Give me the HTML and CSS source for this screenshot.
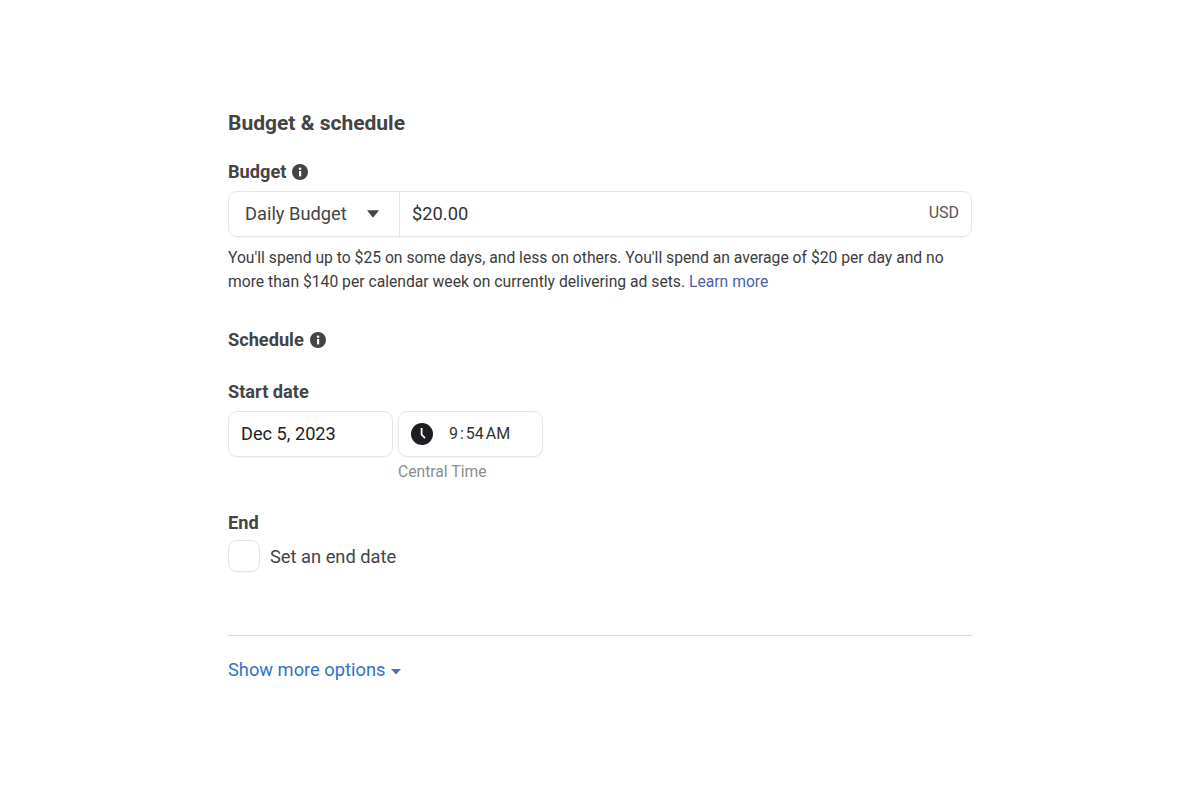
FILE: index.html
```html
<!DOCTYPE html>
<html lang="en-US">
<head>
<meta charset="UTF-8">
<title>Budget &amp; schedule</title>
<link rel="stylesheet" href="styles.css">
</head>
<body>
<div class="panel">
	<h1 class="title">Budget &amp; schedule</h1>

	<div class="label label--budget">
		Budget
		<svg class="info" viewBox="0 0 16 16"><circle cx="8" cy="8" r="8" fill="#444"/><rect x="7" y="7" width="2.2" height="5.4" fill="#fff"/><circle cx="8.1" cy="4.7" r="1.3" fill="#fff"/></svg>
	</div>
	<div class="budget-field">
		<div class="budget-type">
			<span>Daily Budget</span>
			<svg class="caret" viewBox="0 0 14 9"><path d="M1 1.2h12L7.6 8a.8.8 0 0 1-1.2 0z" fill="#444"/></svg>
		</div>
		<div class="budget-amount">
			<span>$20.00</span>
			<span class="currency">USD</span>
		</div>
	</div>
	<p class="hint">You'll spend up to $25 on some days, and less on others. You'll spend an average of $20 per day and no more than $140 per calendar week on currently delivering ad sets. <a class="learn" href="#">Learn more</a></p>

	<div class="label label--schedule">
		Schedule
		<svg class="info" viewBox="0 0 16 16"><circle cx="8" cy="8" r="8" fill="#444"/><rect x="7" y="7" width="2.2" height="5.4" fill="#fff"/><circle cx="8.1" cy="4.7" r="1.3" fill="#fff"/></svg>
	</div>

	<div class="label label--start">Start date</div>
	<div class="date-row">
		<div class="box date">Dec 5, 2023</div>
		<div class="time-col">
			<div class="box time">
				<svg class="clock" viewBox="0 0 22 22"><circle cx="11" cy="11" r="11" fill="#1c1e21"/><path d="M10.6 5v6.6l3.4 3.6" fill="none" stroke="#fff" stroke-width="1.8"/></svg>
				<span class="time-text">9 : 54 AM</span>
			</div>
			<div class="zone">Central Time</div>
		</div>
	</div>

	<div class="label label--end">End</div>
	<div class="end-row">
		<span class="check"></span>
		<span>Set an end date</span>
	</div>

	<hr class="rule">
	<a class="more" href="#">Show more options <svg class="more-caret" viewBox="0 0 10 6"><path d="M0 0h10L5 5.6z" fill="#4a6fc4"/></svg></a>
</div>
</body>
</html>
```

FILE: styles.css
```css
* {
	box-sizing: border-box;
}

body {
	margin: 0;
	background: #fff;
	font-family: Roboto, "Liberation Sans", sans-serif;
	color: #444;
}

.panel {
	width: 744px;
	margin-left: 228px;
	padding-top: 110px;
}

.title {
	margin: 0;
	font-size: 21px;
	line-height: 27px;
	font-weight: 700;
	color: #444;
}

.label {
	display: flex;
	align-items: center;
	gap: 6px;
	font-size: 18.2px;
	line-height: 24px;
	font-weight: 700;
	color: #444;
}

.label--budget {
	margin-top: 23px;
}

.label--schedule {
	margin-top: 34px;
}

.label--start {
	margin-top: 28px;
}

.label--end {
	margin-top: 29px;
}

.info {
	width: 16px;
	height: 16px;
}

.budget-field {
	display: flex;
	height: 46px;
	margin-top: 7px;
	border: 1px solid #e6e6e6;
	border-radius: 9px;
	box-shadow: 0 1px 1px rgba(0, 0, 0, 0.03);
	font-size: 18.3px;
}

.budget-type {
	display: flex;
	align-items: center;
	justify-content: space-between;
	width: 171px;
	padding: 0 19px 2px 16px;
	border-right: 1px solid #e6e6e6;
}

.caret {
	width: 14px;
	height: 9px;
}

.budget-amount {
	flex: 1;
	display: flex;
	align-items: center;
	justify-content: space-between;
	padding: 0 12px 2px 12px;
	color: #333;
}

.currency {
	font-size: 16px;
	margin-top: -2px;
	color: #555;
}

.hint {
	margin: 9px 0 0;
	font-size: 15.7px;
	line-height: 24px;
	color: #3c3c3c;
}

.learn {
	color: #4c5fa8;
	text-decoration: none;
}

.date-row {
	display: flex;
	gap: 5px;
	margin-top: 7px;
}

.box {
	display: flex;
	align-items: center;
	height: 46px;
	border: 1px solid #e6e6e6;
	border-radius: 9px;
	box-shadow: 0 1px 1px rgba(0, 0, 0, 0.03);
}

.date {
	width: 165px;
	padding: 0 0 2px 12px;
	font-size: 18.2px;
	color: #222;
}

.time {
	width: 145px;
	padding-left: 12px;
	gap: 16px;
	font-size: 16px;
	color: #333;
}

.time-text {
	margin-top: -2px;
	word-spacing: -2px;
}

.clock {
	width: 22px;
	height: 22px;
}

.zone {
	margin-top: 5px;
	font-size: 15.7px;
	line-height: 20px;
	color: #8a8d91;
}

.end-row {
	display: flex;
	align-items: center;
	gap: 10px;
	margin-top: 5px;
	font-size: 18.3px;
	color: #444;
}

.check {
	width: 32px;
	height: 32px;
	border: 1px solid #e6e6e6;
	border-radius: 9px;
	box-shadow: 0 1px 1px rgba(0, 0, 0, 0.03);
}

.rule {
	height: 1px;
	margin: 63px 0 0;
	border: 0;
	background: #dcdcdc;
}

.more {
	display: flex;
	align-items: center;
	gap: 6px;
	margin-top: 22px;
	font-size: 18.3px;
	line-height: 24px;
	color: #2f73c9;
	text-decoration: none;
}

.more-caret {
	width: 10px;
	height: 6px;
	margin-top: 3px;
}
```
